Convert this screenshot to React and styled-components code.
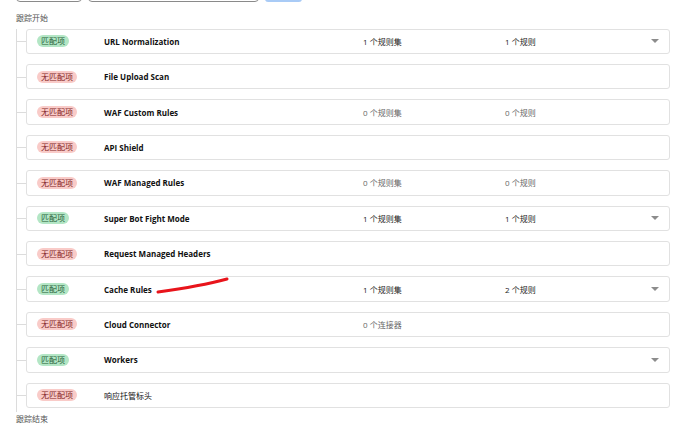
import React from "react";
import styled, { createGlobalStyle } from "styled-components";

const GlobalStyle = createGlobalStyle`
  html, body {
    margin: 0;
    padding: 0;
    background: #ffffff;
  }
  body {
    font-family: "Open Sans", "Noto Sans CJK SC", sans-serif;
    color: #222;
    overflow: hidden;
  }
`;

const Page = styled.div`
  width: 690px;
  height: 425px;
  padding: 0 20px 0 16px;
  box-sizing: border-box;
  display: flex;
  flex-direction: column;
`;

const Toolbar = styled.div`
  display: flex;
  gap: 6px;
  margin-top: -22px;
  height: 24px;
`;

const Field = styled.div`
  width: ${(p) => p.$w}px;
  height: 24px;
  box-sizing: border-box;
  border: 1px solid #8a8a8a;
  border-radius: 4px;
  background: #fff;
`;

const Submit = styled.div`
  width: 37px;
  height: 24px;
  border-radius: 3px;
  background: #a9cbf6;
`;

const Label = styled.div`
  font-size: 8px;
  line-height: 12px;
  color: #555;
  margin-top: 10px;
  height: 12px;
`;

const Tree = styled.div`
  display: flex;
  flex-direction: column;
  gap: 10px;
  margin-top: 4.6px;
  padding: 0 0 4.5px 9px;
  border-left: 1px solid #dcdcdc;
`;

const Row = styled.div`
  position: relative;
  height: 25.4px;
  box-sizing: border-box;
  border: 1px solid #e1e1e1;
  border-radius: 3px;
  background: #fff;
  display: grid;
  grid-template-columns: 67px 259px 142px 1fr 16px;
  align-items: center;
  padding-left: 10px;
  padding-right: 6px;

  &::before {
    content: "";
    position: absolute;
    left: -10px;
    top: 50%;
    width: 9px;
    height: 1px;
    background: #dcdcdc;
  }
`;

const Badge = styled.span`
  justify-self: start;
  font-size: 8px;
  line-height: 12px;
  height: 12px;
  padding: 0 4px;
  border-radius: 6px;
  background: ${(p) => (p.$match ? "#b3e6c5" : "#f9cbc8")};
  color: ${(p) => (p.$match ? "#1f5e36" : "#7f1d1d")};
`;

const Name = styled.span`
  font-size: 8px;
  font-weight: ${(p) => (p.$plain ? 400 : 700)};
  color: #111;
  white-space: nowrap;
`;

const Count = styled.span`
  font-size: 8px;
  color: ${(p) => (p.$zero ? "#666" : "#1a1a1a")};
  white-space: nowrap;
`;

const Caret = styled.span`
  justify-self: center;
  width: 0;
  height: 0;
  border-left: 4px solid transparent;
  border-right: 4px solid transparent;
  border-top: 4px solid #8c8c8c;
`;

const End = styled.div`
  font-size: 8px;
  line-height: 12px;
  color: #555;
  margin-top: 1px;
`;

const rows = [
  { match: true, name: "URL Normalization", a: "1 个规则集", b: "1 个规则", caret: true },
  { match: false, name: "File Upload Scan" },
  { match: false, name: "WAF Custom Rules", a: "0 个规则集", b: "0 个规则" },
  { match: false, name: "API Shield" },
  { match: false, name: "WAF Managed Rules", a: "0 个规则集", b: "0 个规则" },
  { match: true, name: "Super Bot Fight Mode", a: "1 个规则集", b: "1 个规则", caret: true },
  { match: false, name: "Request Managed Headers" },
  { match: true, name: "Cache Rules", a: "1 个规则集", b: "2 个规则", caret: true, mark: true },
  { match: false, name: "Cloud Connector", a: "0 个连接器" },
  { match: true, name: "Workers", caret: true },
  { match: false, name: "响应托管标头", plain: true },
];

const Scribble = styled.svg`
  position: absolute;
  left: 128px;
  top: 0px;
  pointer-events: none;
`;

export default function App() {
  return (
    <Page>
      <GlobalStyle />
      <Toolbar>
        <Field $w={66} />
        <Field $w={171} />
        <Submit />
      </Toolbar>
      <Label>跟踪开始</Label>
      <Tree>
        {rows.map((r) => (
          <Row key={r.name}>
            <Badge $match={r.match}>{r.match ? "匹配项" : "无匹配项"}</Badge>
            <Name $plain={r.plain}>{r.name}</Name>
            <Count $zero={r.a && r.a.startsWith("0")}>{r.a}</Count>
            <Count $zero={r.b && r.b.startsWith("0")}>{r.b}</Count>
            {r.caret ? <Caret /> : <span />}
            {r.mark && (
              <Scribble width="76" height="18" viewBox="0 0 76 18">
                <path d="M3 15 C 25 12, 50 8, 72 2" stroke="#e8141b" strokeWidth="3" strokeLinecap="round" fill="none" />
              </Scribble>
            )}
          </Row>
        ))}
      </Tree>
      <End>跟踪结束</End>
    </Page>
  );
}
